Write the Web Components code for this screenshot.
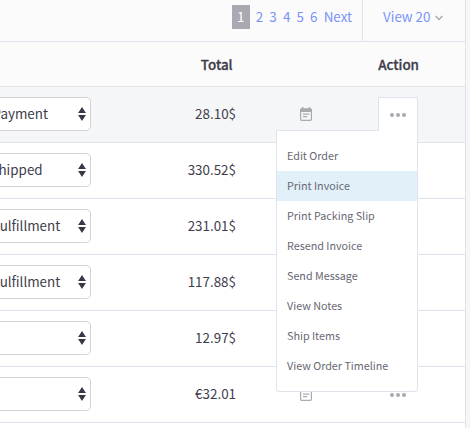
<!DOCTYPE html>
<html lang="en">
<head>
<meta charset="utf-8">
<title>Orders</title>
<style>
html, body { margin: 0; height: 100%; overflow: hidden; background: #f5f6f8; }
body { font: 13.4px/20px "Noto Sans CJK SC", "Noto Sans", sans-serif; color: #3e3d4b; }
</style>
</head>
<body>
<orders-panel></orders-panel>
<script>
const define = (name, html, setup) => customElements.define(name, class extends HTMLElement {
  constructor() {
    super();
    this.attachShadow({ mode: 'open' }).innerHTML = html;
  }
  connectedCallback() { if (setup) setup(this, this.shadowRoot); }
});

define('note-icon', `
<style>:host{display:block;width:12px;height:14px} svg{display:block}</style>
<svg width="12" height="14" viewBox="0 0 12 14">
  <rect x=".6" y="2" width="10.8" height="11.3" rx="1" fill="none" stroke="#aaa9b1" stroke-width="1.2"/>
  <path d="M0 5V2.4Q0 1.4 1 1.4H11Q12 1.4 12 2.4V5Z" fill="#aaa9b1"/>
  <path d="M2 0h1.4v2H2zM8.6 0H10v2H8.6z" fill="#aaa9b1"/>
  <path d="M3 7.1h6.2M3 9.7h4.2" stroke="#aaa9b1" stroke-width="1.2"/>
</svg>`);

define('more-dots', `
<style>:host{display:block;width:16px;height:4px} svg{display:block}</style>
<svg width="16" height="4" viewBox="0 0 16 4" fill="#aaa9b1"><circle cx="2" cy="2" r="2"/><circle cx="8" cy="2" r="2"/><circle cx="14" cy="2" r="2"/></svg>`);

define('status-select', `
<style>
:host{display:flex;box-sizing:border-box;width:91px;height:34px;border:1px solid #d3d3d6;border-left:0;border-radius:0 5px 5px 0;background:#fff;align-items:center;justify-content:space-between;padding-right:4px;overflow:hidden}
span{white-space:nowrap;margin-left:var(--shift,0px);padding-bottom:2px}
svg{flex:none}
</style>
<span><slot></slot></span>
<svg width="8" height="14" viewBox="0 0 8 14" fill="#383746"><path d="M4 0L7.4 5.3H.6ZM4 14L.6 8.7H7.4Z"/><path d="M.4 5h7.2v1H.4zM.4 8h7.2v1H.4z"/></svg>`);

define('order-row', `
<style>
:host{display:grid;grid-template-columns:91px 145px 140px 44px 1fr;box-sizing:border-box;height:56px;align-items:center;border-bottom:1px solid #e1e3ec;background:#fff;padding-bottom:1px}
:host([active]){background:#f5f6f8}
.total{text-align:right;padding-bottom:2px}
note-icon{justify-self:center}
more-dots{justify-self:center;margin-top:2px}
</style>
<status-select><slot></slot></status-select><div class="total"></div><note-icon></note-icon><more-dots></more-dots>`,
(el, root) => { root.querySelector('.total').textContent = el.getAttribute('total'); });

define('table-head', `
<style>
:host{display:grid;grid-template-columns:232.6px 186.4px;box-sizing:border-box;height:45px;align-items:center;border-bottom:1px solid #e1e5ea;font-weight:500;text-align:right;background:#fbfbfb}
b{font-weight:inherit;-webkit-text-stroke:.3px currentColor}
</style><b>Total</b><b>Action</b>`);

define('page-bar', `
<style>
:host{display:flex;box-sizing:border-box;height:42px;border-bottom:1px solid #e1e3ec;background:#fbfbfb;color:#7a93f8}
nav{display:flex;box-sizing:border-box;width:363px;padding:5px 10px 0 0;border-right:1px solid #e1e3ec;justify-content:flex-end;gap:6.15px;line-height:22px}
.on{width:18px;height:24px;background:#aaa9b1;color:#fff;text-align:center}
.view{display:flex;align-items:center;gap:5px;padding:5px 0 0 20px;height:24px;line-height:24px}
.view span{padding-bottom:2px}
.view svg{margin-top:1px}
</style>
<nav><span class="on">1</span><span>2</span><span>3</span><span>4</span><span>5</span><span>6</span><span>Next</span></nav>
<div class="view"><span>View 20</span><svg width="8" height="6" viewBox="0 0 8 6" fill="none" stroke="#aaa9b1" stroke-width="1.4"><path d="M.6 1L4 4.6L7.4 1"/></svg></div>`);

define('menu-item', `
<style>
:host{display:block;height:30px;line-height:30px;padding-left:10px;white-space:nowrap}
:host([selected]){background:#e2f0fa}
</style><slot></slot>`);

define('action-menu', `
<style>
:host{display:block;position:absolute;left:276px;top:130px;box-sizing:border-box;width:142px;height:262px;border:1px solid #e1e3ec;border-radius:0 0 3px 3px;background:#fff;padding-top:10px;font-size:10.75px;color:#686773}
.tab{position:absolute;right:-1px;top:-34px;box-sizing:border-box;width:40px;height:34px;border:1px solid #e1e3ec;border-bottom:0;background:#fff;display:flex;justify-content:center;padding-top:15px}
</style>
<div class="tab"><more-dots></more-dots></div><slot></slot>`);

define('orders-panel', `
<style>:host{display:block;position:relative;box-sizing:border-box;width:466px;height:428px;background:#fff;border-right:1px solid #e1e3ec}</style>
<page-bar></page-bar>
<table-head></table-head>
<order-row active total="28.10$" style="--shift:-7.4px">Payment</order-row>
<order-row total="330.52$" style="--shift:-9.5px">Shipped</order-row>
<order-row total="231.01$" style="--shift:-7.5px">Fulfillment</order-row>
<order-row total="117.88$" style="--shift:-7.5px">Fulfillment</order-row>
<order-row total="12.97$"></order-row>
<order-row total="€32.01"></order-row>
<action-menu>
<menu-item>Edit Order</menu-item>
<menu-item selected>Print Invoice</menu-item>
<menu-item>Print Packing Slip</menu-item>
<menu-item>Resend Invoice</menu-item>
<menu-item>Send Message</menu-item>
<menu-item>View Notes</menu-item>
<menu-item>Ship Items</menu-item>
<menu-item>View Order Timeline</menu-item>
</action-menu>`);
</script>
</body>
</html>
